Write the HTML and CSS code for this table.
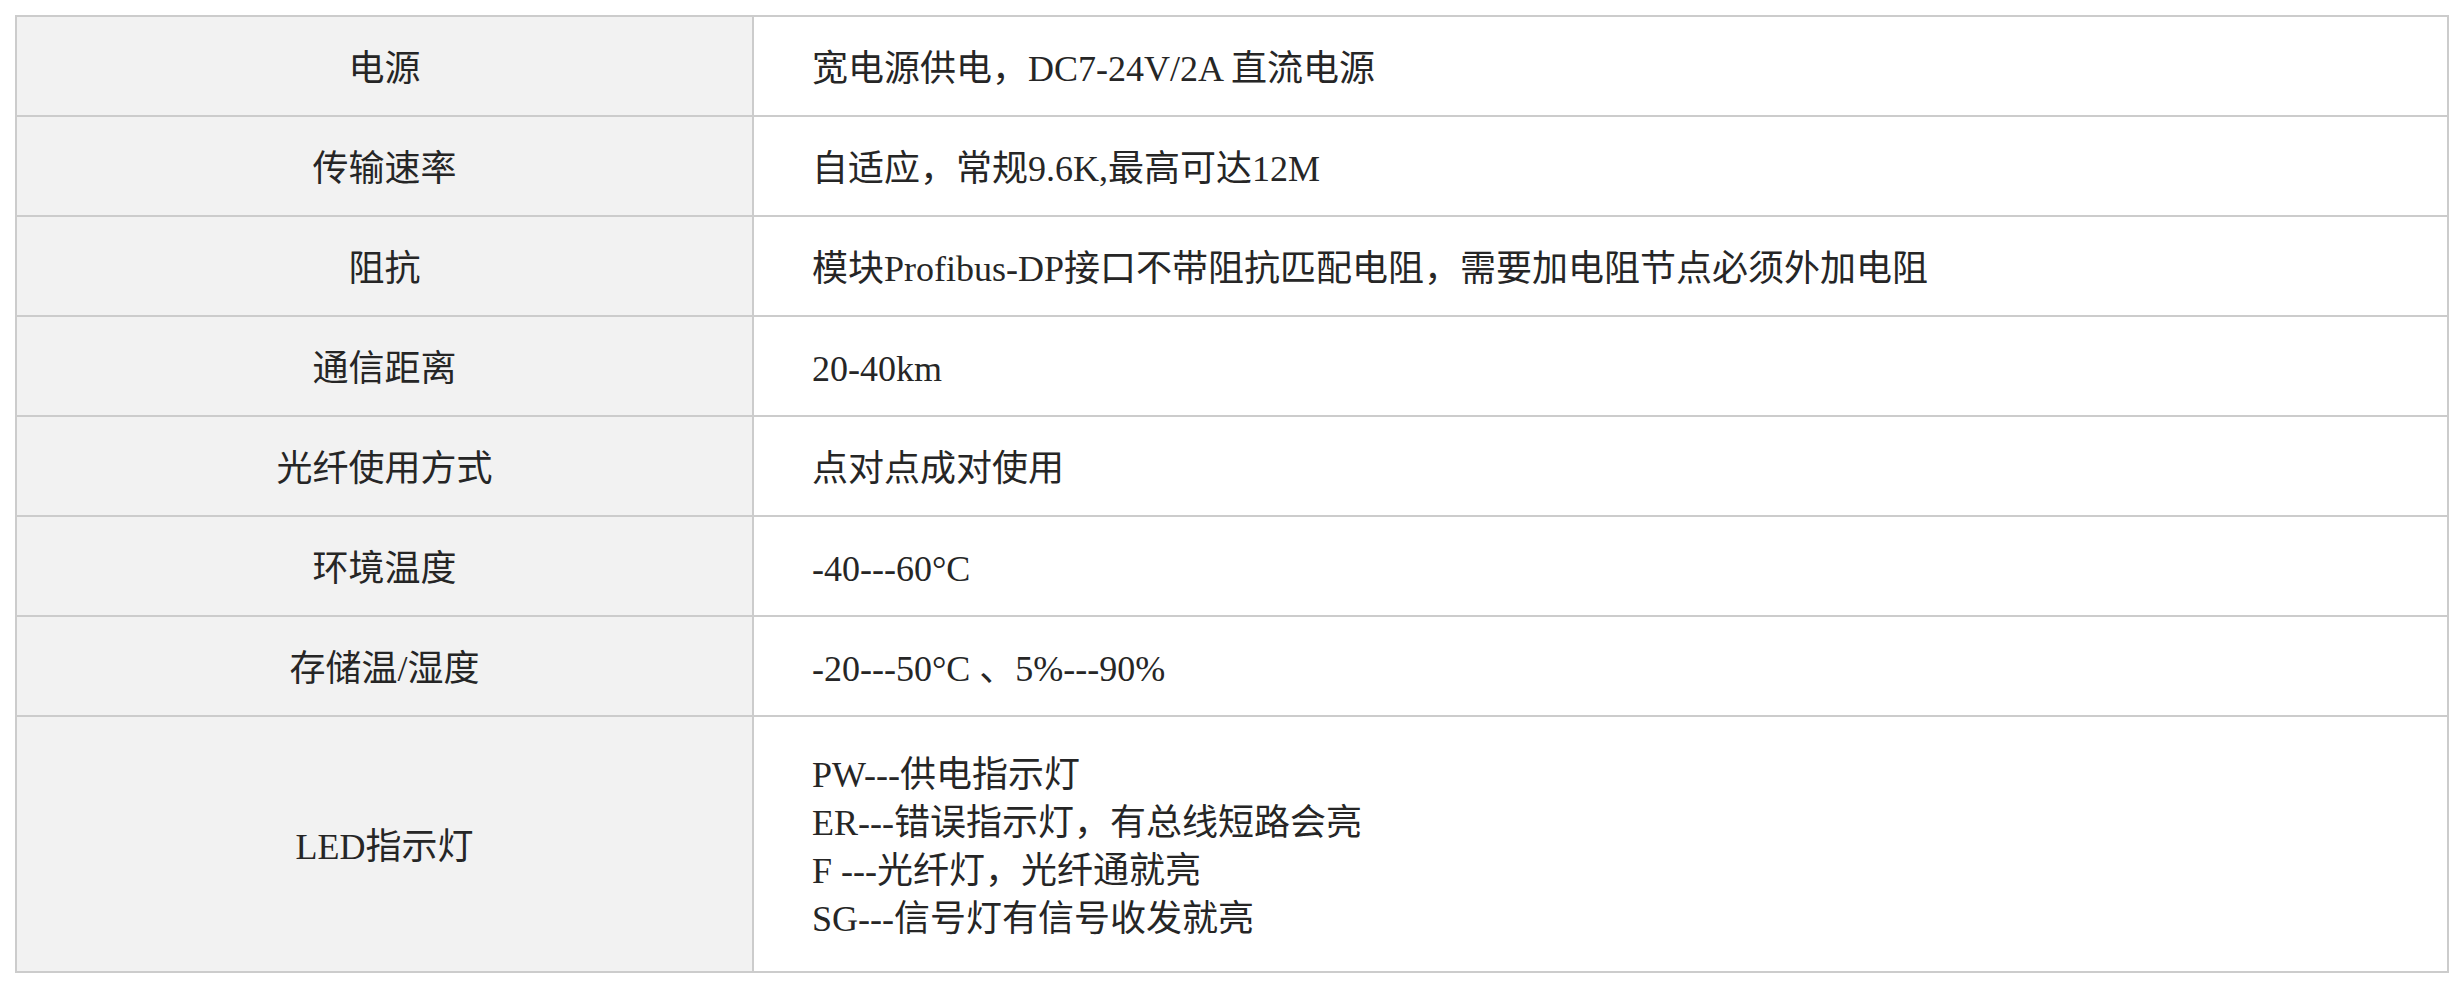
FILE: index.html
```html
<!DOCTYPE html>
<html lang="zh-CN">
<head>
<meta charset="utf-8">
<title>参数</title>
<link rel="stylesheet" href="styles.css">
</head>
<body>
<table class="spec">
  <colgroup>
    <col class="col-label">
    <col class="col-value">
  </colgroup>
  <tbody>
    <tr><td class="label">电源</td><td class="value">宽电源供电，DC7-24V/2A 直流电源</td></tr>
    <tr><td class="label">传输速率</td><td class="value">自适应，常规9.6K,最高可达12M</td></tr>
    <tr><td class="label">阻抗</td><td class="value">模块Profibus-DP接口不带阻抗匹配电阻，需要加电阻节点必须外加电阻</td></tr>
    <tr><td class="label">通信距离</td><td class="value">20-40km</td></tr>
    <tr><td class="label">光纤使用方式</td><td class="value">点对点成对使用</td></tr>
    <tr><td class="label">环境温度</td><td class="value">-40---60°C</td></tr>
    <tr><td class="label">存储温/湿度</td><td class="value">-20---50°C 、5%---90%</td></tr>
    <tr class="tall"><td class="label">LED指示灯</td><td class="value">PW---供电指示灯<br>ER---错误指示灯，有总线短路会亮<br>F ---光纤灯，光纤通就亮<br>SG---信号灯有信号收发就亮</td></tr>
  </tbody>
</table>
</body>
</html>
```

FILE: styles.css
```css
html, body {
  background: #ffffff;
}
body {
  margin: 15px;
  font-family: "Liberation Serif", "Noto Sans CJK SC", serif;
  font-size: 36px;
  line-height: 48px;
  color: #262626;
}
.spec {
  width: 100%;
  border-collapse: collapse;
  table-layout: fixed;
  border: 2px solid #cccccc;
}
.col-label {
  width: 737px;
}
.spec td {
  border: 2px solid #cccccc;
  padding: 28px 20px 22px;
  vertical-align: middle;
}
.spec .label {
  background: #f2f2f2;
  text-align: center;
}
.spec .value {
  text-align: left;
  padding-left: 58px;
}
.spec .tall td {
  padding-top: 34px;
  padding-bottom: 28px;
}
```
